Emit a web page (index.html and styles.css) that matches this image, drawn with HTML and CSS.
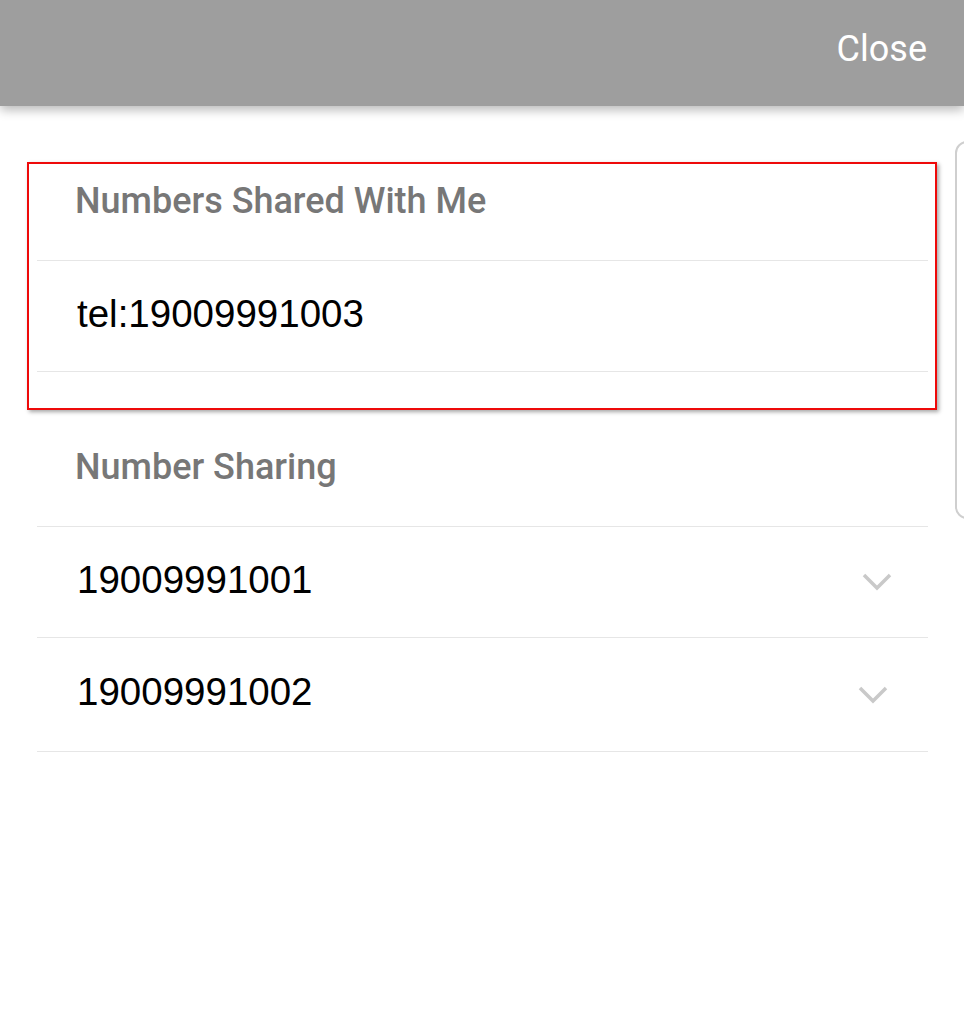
FILE: index.html
```html
<!DOCTYPE html>
<html>
<head>
<meta charset="utf-8">
<link rel="stylesheet" href="styles.css">
</head>
<body>
<header class="topbar">
  <span class="close">Close</span>
</header>
<main class="content">
  <div class="scroll-edge"></div>
  <section class="section section-highlight">
    <div class="annot"></div>
    <h2 class="heading">Numbers Shared With Me</h2>
    <div class="row"><span class="num">tel:19009991003</span></div>
  </section>
  <section class="section">
    <h2 class="heading">Number Sharing</h2>
    <div class="row">
      <span class="num">19009991001</span>
      <svg class="chev" width="30" height="20" viewBox="0 0 30 20"><path d="M2 3 L15 16 L28 3" fill="none" stroke="#c9c9c9" stroke-width="3.5"/></svg>
    </div>
    <div class="row row-last">
      <span class="num">19009991002</span>
      <svg class="chev" width="30" height="20" viewBox="0 0 30 20"><path d="M2 3 L15 16 L28 3" fill="none" stroke="#c9c9c9" stroke-width="3.5"/></svg>
    </div>
  </section>
</main>
</body>
</html>
```
FILE: styles.css
```css
html, body {
  margin: 0;
  padding: 0;
  background: #fff;
}
body {
  width: 964px;
  height: 1024px;
  overflow: hidden;
  position: relative;
}
.topbar {
  height: 106px;
  background: #9e9e9e;
  display: flex;
  align-items: center;
  justify-content: flex-end;
  padding-right: 37px;
  box-shadow: 0 4px 10px rgba(0, 0, 0, 0.28);
  position: relative;
  z-index: 2;
}
.close {
  font-family: Roboto, sans-serif;
  font-size: 36px;
  color: #fff;
  margin-top: -8px;
}
.content {
  padding: 35px 36px 0 37px;
}
.scroll-edge {
  position: absolute;
  left: 955px;
  top: 141px;
  width: 30px;
  height: 374px;
  border: 2px solid #cfcfcf;
  border-radius: 12px;
}
.section {
  margin-bottom: 35px;
}
.section-highlight {
  position: relative;
}
.annot {
  position: absolute;
  left: -10px;
  right: -9px;
  top: 21px;
  bottom: -38px;
  border: 2px solid #ee0a0a;
  box-shadow: 2px 2px 4px rgba(0, 0, 0, 0.35);
  pointer-events: none;
}
.heading {
  margin: 0;
  height: 119px;
  border-bottom: 1px solid #e6e6e6;
  display: flex;
  align-items: center;
  padding-left: 38px;
  font-family: Roboto, sans-serif;
  font-weight: 500;
  font-size: 36px;
  color: #777;
}
.row {
  height: 110px;
  border-bottom: 1px solid #e6e6e6;
  display: flex;
  align-items: center;
  justify-content: space-between;
  padding: 0 36px 0 40px;
}
.row-last {
  height: 113px;
  padding-right: 40px;
}
.num {
  font-family: "Liberation Sans", Arial, sans-serif;
  font-size: 38.5px;
  color: #000;
  margin-top: -5px;
}
.chev {
  display: block;
}
```
